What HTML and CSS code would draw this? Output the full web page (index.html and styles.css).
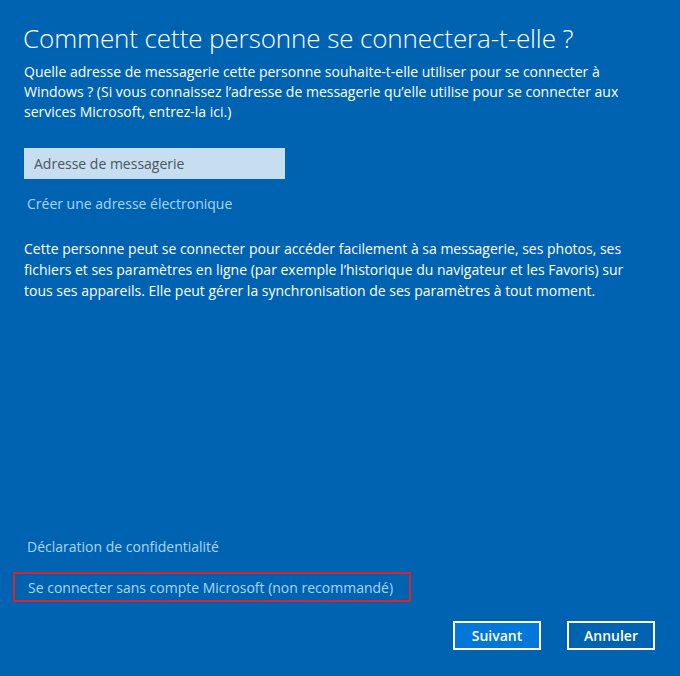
FILE: index.html
```
<!DOCTYPE html>
<html lang="fr">
<head>
  <meta charset="UTF-8">
  <title>Compte Microsoft</title>
  <link rel="stylesheet" href="styles.css">
</head>
<body>
  <div class="page">
    <h1>Comment cette personne se connectera-t-elle ?</h1>
    <p class="intro">Quelle adresse de messagerie cette personne souhaite-t-elle utiliser pour se connecter à Windows ? (Si vous connaissez l’adresse de messagerie qu’elle utilise pour se connecter aux services Microsoft, entrez-la ici.)</p>

    <input type="text" class="email" placeholder="Adresse de messagerie">
    <a class="link create" href="#">Créer une adresse électronique</a>

    <p class="info">Cette personne peut se connecter pour accéder facilement à sa messagerie, ses photos, ses fichiers et ses paramètres en ligne (par exemple l’historique du navigateur et les Favoris) sur tous ses appareils. Elle peut gérer la synchronisation de ses paramètres à tout moment.</p>

    <div class="bottom">
      <a class="link privacy" href="#">Déclaration de confidentialité</a>
      <div class="highlight">
        <a class="link" href="#">Se connecter sans compte Microsoft (non recommandé)</a>
      </div>
      <div class="buttons">
        <button class="btn primary">Suivant</button>
        <button class="btn">Annuler</button>
      </div>
    </div>
  </div>
</body>
</html>
```

FILE: styles.css
```
body {
  margin: 0;
  background-color: #0063b1;
  color: #fff;
  font-family: "Open Sans", "Noto Sans", sans-serif;
}
.page {
  height: 676px;
  box-sizing: border-box;
  padding: 0 25px 0 24px;
  display: flex;
  flex-direction: column;
}
h1 {
  font-weight: 300;
  font-size: 26px;
  line-height: 32px;
  margin: 22px 0 0 -1px;
  letter-spacing: -0.1px;
}
.intro, .info {
  font-size: 14px;
  line-height: 20px;
  margin: 8px 0 0;
  width: 612px;
}
.info {
  line-height: 21px;
  margin-top: 24px;
}
.email {
  width: 261px;
  height: 31px;
  box-sizing: border-box;
  margin-top: 26px;
  padding: 0 10px;
  border: none;
  background-color: #c7def0;
  font-family: inherit;
  font-size: 14px;
}
.email::placeholder {
  color: #4a5560;
}
.link {
  color: #a8d6ff;
  text-decoration: none;
  font-size: 14px;
}
.create {
  margin: 15px 0 0 3px;
  line-height: 20px;
}
.bottom {
  margin-top: auto;
  display: flex;
  flex-direction: column;
  padding-bottom: 26px;
}
.privacy {
  margin-left: 3px;
  line-height: 20px;
}
.highlight {
  margin: 15px 0 0 -11px;
  width: 398px;
  height: 30px;
  box-sizing: border-box;
  border: 2px solid #d42430;
  padding: 0 0 0 13px;
  display: flex;
  align-items: center;
}
.buttons {
  margin-top: 19px;
  display: flex;
  justify-content: flex-end;
  gap: 26px;
}
.btn {
  width: 88px;
  height: 29px;
  border: 2px solid #fff;
  background-color: #0063b1;
  color: #fff;
  font-family: inherit;
  font-size: 14px;
  font-weight: 600;
  padding: 0;
}
.btn.primary {
  background-color: #0077d9;
}
```
